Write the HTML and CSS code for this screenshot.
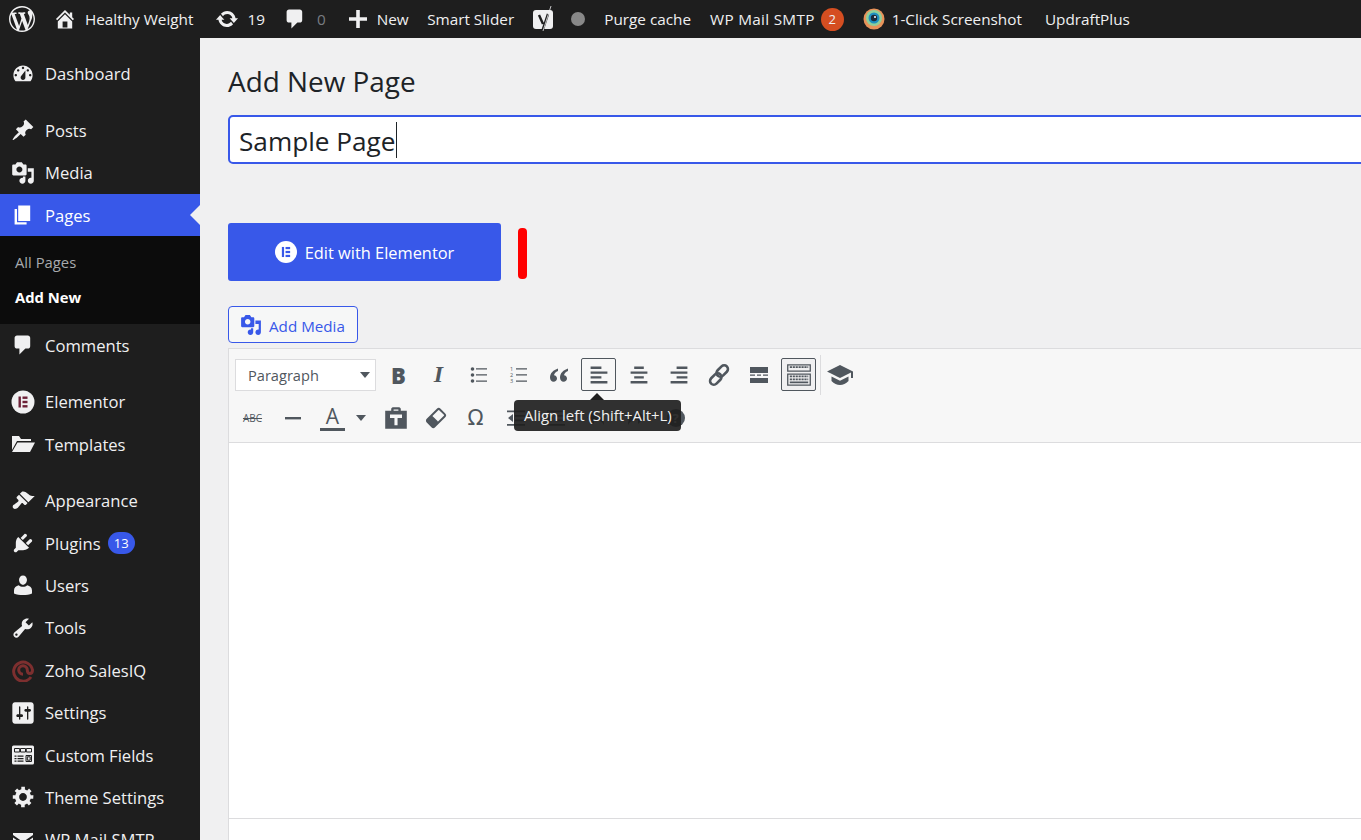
FILE: index.html
```html
<!DOCTYPE html>
<html lang="en">
<head>
  <meta charset="UTF-8" />
  <title>Add New Page</title>
  <link rel="stylesheet" href="styles.css">
</head>
<body>

<!-- Admin bar -->
<div class="adminbar">
  <svg class="bar-logo" viewBox="0 0 20 20"><path d="M20 10c0-5.510-4.490-10-10-10C4.480 0 0 4.490 0 10c0 5.520 4.480 10 10 10 5.510 0 10-4.480 10-10zM7.780 15.370L4.370 6.220c.550-.020 1.170-.080 1.170-.080.500-.060.440-1.130-.060-1.110 0 0-1.450.110-2.370.110-.180 0-.370 0-.580-.010C4.120 2.690 6.870 1.070 10 1.070c2.330 0 4.450.870 6.050 2.340-.680-.110-1.650.390-1.650 1.580 0 .740.450 1.360.900 2.100.350.610.550 1.360.550 2.460 0 1.490-1.400 5-1.400 5l-3.030-8.350c.540-.020.820-.170.820-.170.500-.050.440-1.250-.060-1.220 0 0-1.440.120-2.380.120-.870 0-2.330-.120-2.330-.120-.500-.030-.560 1.200-.060 1.220l.920.080 1.260 3.410zM17.410 10c.240-.640.740-1.870.430-4.250.700 1.290 1.050 2.710 1.050 4.250 0 3.290-1.730 6.240-4.510 7.750 1.010-2.700 2.020-5.030 3.030-7.750zM6.100 18.090C3.120 16.650 1.110 13.530 1.110 10c0-1.300.230-2.480.720-3.590C3.250 10.300 4.670 14.200 6.100 18.090zm4.030-6.630l2.580 6.980c-.860.290-1.740.450-2.710.450-.790 0-1.570-.110-2.290-.330.810-2.380 1.620-4.740 2.420-7.100z"/></svg>
  <div class="bar-item home">
    <svg class="bar-icon" viewBox="0 0 20 20"><path d="M16 8.500l1.530 1.530-1.060 1.060L10 4.620l-6.470 6.470-1.060-1.060L10 2.500l4 4v-2h2v4zm-6-2.460l6 5.990V18H4v-5.970zM12 17v-5H8v5h4z"/></svg>
    <span>Healthy Weight</span>
  </div>
  <div class="bar-item updates">
    <svg class="bar-icon" viewBox="0 0 20 20"><path d="M10.200 3.280c3.530 0 6.430 2.610 6.920 6h2.080l-3.500 4-3.500-4h2.320c-.45-1.970-2.210-3.440-4.320-3.440-1.450 0-2.730.710-3.540 1.780L4.950 5.660C6.230 4.200 8.110 3.280 10.200 3.280zm-.4 13.440c-3.520 0-6.430-2.610-6.920-6H.8l3.500-4c1.170 1.330 2.330 2.670 3.500 4H5.480c.45 1.970 2.210 3.440 4.320 3.440 1.450 0 2.730-.710 3.540-1.780l1.710 1.950c-1.280 1.460-3.150 2.390-5.250 2.390z"/></svg>
    <span>19</span>
  </div>
  <div class="bar-item comments">
    <svg class="bar-icon" viewBox="0 0 20 20"><path d="M5 2h9c1.100 0 2 .9 2 2v7c0 1.100-.9 2-2 2h-2l-5 5v-5H5c-1.100 0-2-.9-2-2V4c0-1.100.9-2 2-2z"/></svg>
    <span class="muted">0</span>
  </div>
  <div class="bar-item new">
    <svg class="bar-icon" viewBox="0 0 20 20"><path d="M8.500 2.500h3v6h6v3h-6v6h-3v-6h-6v-3h6z"/></svg>
    <span>New</span>
  </div>
  <div class="bar-item slider">Smart Slider</div>
  <div class="bar-item yoast">
    <svg class="bar-yoast" viewBox="0 0 22 28"><rect x="0" y="5" width="20" height="19" rx="3" fill="#f0f0f1"/><path d="M6 10l4 9M15 9l-5 15-3 3" fill="none" stroke="#1e1e1e" stroke-width="2.400"/><path d="M18 1l-8 25" fill="none" stroke="#f0f0f1" stroke-width=".8"/></svg>
    <span class="status-dot"></span>
  </div>
  <div class="bar-item purge">Purge cache</div>
  <div class="bar-item smtp">
    <span class="smtp-label">WP Mail SMTP</span>
    <span class="bar-badge">2</span>
  </div>
  <div class="bar-item shot">
    <svg class="bar-shot" viewBox="0 0 22 22"><circle cx="11" cy="11" r="10.500" fill="#e8935a"/><circle cx="11" cy="10" r="8" fill="#8fcf9a"/><circle cx="11" cy="10" r="5.500" fill="#1f8fc0"/><circle cx="11" cy="10" r="3.200" fill="#1b2a3a"/><circle cx="12" cy="9" r="1" fill="#fff"/></svg>
    <span>1-Click Screenshot</span>
  </div>
  <div class="bar-item updraft">UpdraftPlus</div>
</div>

<div class="layout">

  <!-- Sidebar -->
  <div class="sidebar">
    <div class="menu-item">
      <svg class="menu-icon" viewBox="0 0 20 20"><path fill-rule="evenodd" d="M3.760 16h12.480c1.100-1.370 1.760-3.110 1.760-5 0-4.420-3.580-8-8-8s-8 3.580-8 8c0 1.890.66 3.630 1.760 5zM10 4c.55 0 1 .45 1 1s-.45 1-1 1-1-.45-1-1 .45-1 1-1zM6 6c.55 0 1 .45 1 1s-.45 1-1 1-1-.45-1-1 .45-1 1-1zm8 0c.55 0 1 .45 1 1s-.45 1-1 1-1-.45-1-1 .45-1 1-1zm-5.370 5.550L12 7v6c0 1.100-.9 2-2 2s-2-.9-2-2c0-.57.24-1.080.63-1.450zM4 10c.55 0 1 .45 1 1s-.45 1-1 1-1-.45-1-1 .45-1 1-1zm12 0c.55 0 1 .45 1 1s-.45 1-1 1-1-.45-1-1 .45-1 1-1z"/></svg>
      <span>Dashboard</span>
    </div>
    <div class="menu-gap"></div>
    <div class="menu-item">
      <svg class="menu-icon" viewBox="0 0 20 20"><path d="M10.440 3.020l1.820-1.820 6.360 6.350-1.830 1.820c-1.050-.68-2.480-.57-3.410.36l-.75.75c-.92.93-1.040 2.350-.35 3.410l-1.830 1.820-2.410-2.410-2.800 2.790c-.42.42-3.380 2.710-3.800 2.290s1.860-3.390 2.280-3.810l2.790-2.790L4.100 9.360l1.830-1.820c1.050.69 2.480.57 3.400-.36l.75-.75c.93-.92 1.050-2.350.36-3.410z"/></svg>
      <span>Posts</span>
    </div>
    <div class="menu-item">
      <svg class="menu-icon" viewBox="0 0 20 20"><path fill-rule="evenodd" d="M13 11V4c0-.55-.45-1-1-1h-1.670L9 1H5L3.670 3H2c-.55 0-1 .45-1 1v7c0 .55.45 1 1 1h10c.55 0 1-.45 1-1zM7 4.500c1.380 0 2.500 1.120 2.500 2.500S8.380 9.500 7 9.500 4.500 8.380 4.500 7 5.620 4.500 7 4.500zM14 6h5v10.500c0 1.380-1.120 2.500-2.500 2.500S14 17.880 14 16.500s1.120-2.500 2.500-2.500c.17 0 .34.020.5.050V9h-3V6zm-4 8.050V13h2v3.500c0 1.380-1.120 2.500-2.500 2.500S7 17.880 7 16.500 8.120 14 9.500 14c.17 0 .34.020.5.050z"/></svg>
      <span>Media</span>
    </div>
    <div class="menu-item current">
      <svg class="menu-icon" viewBox="0 0 20 20"><path d="M6 15V2h10v13H6zm-1 1h8v2H3V5h2v11z"/></svg>
      <span>Pages</span>
    </div>
    <div class="submenu">
      <div class="sub-item">All Pages</div>
      <div class="sub-item active">Add New</div>
    </div>
    <div class="menu-item">
      <svg class="menu-icon" viewBox="0 0 20 20"><path d="M5 2h9c1.100 0 2 .9 2 2v7c0 1.100-.9 2-2 2h-2l-5 5v-5H5c-1.100 0-2-.9-2-2V4c0-1.100.9-2 2-2z"/></svg>
      <span>Comments</span>
    </div>
    <div class="menu-gap"></div>
    <div class="menu-item">
      <svg class="menu-icon" viewBox="0 0 24 24"><circle cx="12" cy="12" r="11.500"/><rect x="7.500" y="6.500" width="2.400" height="11" fill="#6d2138"/><rect x="11.500" y="6.500" width="5" height="2.400" fill="#6d2138"/><rect x="11.500" y="10.800" width="5" height="2.400" fill="#6d2138"/><rect x="11.500" y="15.100" width="5" height="2.400" fill="#6d2138"/></svg>
      <span>Elementor</span>
    </div>
    <div class="menu-item">
      <svg class="menu-icon" viewBox="0 0 24 24"><path d="M1 4h7l2 3h10v2H6L1 18zM6.500 10.500H24L19 20H1z"/></svg>
      <span>Templates</span>
    </div>
    <div class="menu-gap"></div>
    <div class="menu-item">
      <svg class="menu-icon" viewBox="0 0 20 20"><path d="M14.480 11.060L7.410 3.990l1.500-1.500c.5-.56 2.300-.47 3.510.32 1.210.8 1.430 1.280 2.910 2.100 1.180.64 2.450 1.260 4.450.85zm-.71.71L6.700 4.700 4.930 6.470c-.39.39-.39 1.020 0 1.410l1.060 1.060c.39.39.39 1.030 0 1.420-.6.6-1.430 1.110-2.210 1.690-.35.26-.7.53-1.010.84C1.430 13.230.91 14.990 1.950 16.040c1.040 1.040 2.810.52 4.140-.82.31-.31.58-.65.84-1 .58-.78 1.090-1.610 1.690-2.210.39-.39 1.020-.39 1.410 0l1.060 1.060c.39.39 1.020.39 1.410 0z"/></svg>
      <span>Appearance</span>
    </div>
    <div class="menu-item">
      <svg class="menu-icon" viewBox="0 0 20 20"><path d="M13.110 4.360L9.870 7.600 8 5.730l3.240-3.240c.35-.34 1.050-.2 1.560.32.52.51.66 1.210.31 1.550zm-8 1.770l.91-1.120 9.010 9.010-1.190.84c-.71.71-2.630 1.160-3.820 1.160H6.140L4.900 17.260c-.59.59-1.540.59-2.120 0-.59-.58-.59-1.530 0-2.120l1.240-1.240v-3.880c0-1.130.4-3.190 1.090-3.890zm7.260 3.970l3.240-3.240c.34-.35 1.040-.21 1.550.31.52.51.66 1.210.31 1.550l-3.240 3.250z"/></svg>
      <span>Plugins</span>
      <span class="menu-badge">13</span>
    </div>
    <div class="menu-item">
      <svg class="menu-icon" viewBox="0 0 20 20"><path d="M10 2c1.900 0 3.300 1.600 3.300 3.600S11.900 9.800 10 9.800 6.700 7.600 6.700 5.600 8.100 2 10 2zM6.500 10.200c.9.900 2.100 1.300 3.500 1.300s2.600-.4 3.500-1.300c2.300.6 4 2 4 4.300V17c-2 1-4.800 1.300-7.500 1.300S4.500 18 2.500 17v-2.500c0-2.300 1.700-3.700 4-4.300z"/></svg>
      <span>Users</span>
    </div>
    <div class="menu-item">
      <svg class="menu-icon" viewBox="0 0 20 20"><path fill-rule="evenodd" d="M16.680 9.770c-1.340 1.340-3.300 1.670-4.950.99l-5.410 6.520c-.99.99-2.590.99-3.570 0-.99-.98-.99-2.580 0-3.570l6.520-5.420c-.68-1.650-.35-3.610.99-4.950 1.280-1.280 3.120-1.620 4.720-1.060l-2.890 2.890 2.820 2.820 2.860-2.870c.53 1.580.18 3.390-1.090 4.650zM3.810 16.210c.4.39 1.030.39 1.420 0 .4-.4.4-1.030 0-1.430-.39-.39-1.020-.39-1.420 0-.39.4-.39 1.030 0 1.430z"/></svg>
      <span>Tools</span>
    </div>
    <div class="menu-item">
      <svg class="menu-icon" viewBox="0 0 24 24"><path d="M20 19A9.500 9.500 0 1 1 21.500 12c0 2-1 3.500-2.600 3.500S16.300 14 16.300 12A4.300 4.300 0 1 0 12 16.300" fill="none" stroke="#7d2f2f" stroke-width="3"/></svg>
      <span>Zoho SalesIQ</span>
    </div>
    <div class="menu-item">
      <svg class="menu-icon" viewBox="1 1 18 18"><path fill-rule="evenodd" d="M18 16V4c0-1.100-.9-2-2-2H4c-1.100 0-2 .9-2 2v12c0 1.100.9 2 2 2h12c1.100 0 2-.9 2-2zM8 11h1c.55 0 1 .45 1 1s-.45 1-1 1H8v1.500c0 .28-.22.5-.5.5s-.5-.22-.5-.5V13H6c-.55 0-1-.45-1-1s.45-1 1-1h1V5.500c0-.28.22-.5.5-.5s.5.22.5.5V11zm5-2h-1c-.55 0-1-.45-1-1s.45-1 1-1h1V5.500c0-.28.22-.5.5-.5s.5.22.5.5V7h1c.55 0 1 .45 1 1s-.45 1-1 1h-1v5.500c0 .28-.22.5-.5.5s-.5-.22-.5-.5V9z"/></svg>
      <span>Settings</span>
    </div>
    <div class="menu-item">
      <svg class="menu-icon" viewBox="0 0 24 24"><rect x="1" y="2.500" width="22" height="19" rx="1.500"/><path d="M3.500 5.500h5.200v3.500H3.500zM9.500 5.500h5v3.500h-5zM15.300 5.500h5.200v3.500h-5.200zM15 12.500h5.500v6H15zM16.300 13.800v3.400h2.900v-3.400z" fill="none" stroke="#1e1e1e" stroke-width="1"/><path d="M3.500 12.500h2v1.200h-2zM6.500 12.500h6v1.200h-6zM3.500 15h2v1.200h-2zM6.500 15h6v1.200h-6zM3.500 17.500h2v1.200h-2zM6.500 17.500h6v1.200h-6z" fill="#1e1e1e"/></svg>
      <span>Custom Fields</span>
    </div>
    <div class="menu-item">
      <svg class="menu-icon" viewBox="0 0 20 20"><path fill-rule="evenodd" d="M18.500 11.500h-2.180c-.17.7-.47 1.350-.87 1.920l1.540 1.540-2.100 2.100-1.540-1.540c-.57.4-1.220.7-1.920.87v2.180h-3v-2.180c-.7-.17-1.350-.47-1.920-.87l-1.540 1.540-2.120-2.120 1.540-1.540c-.4-.57-.7-1.220-.87-1.920H1.500v-3h2.180c.17-.7.47-1.350.87-1.920L3.010 5.040l2.120-2.120 1.540 1.540c.57-.4 1.220-.7 1.920-.87V1.500h3v2.180c.7.17 1.350.47 1.920.87l1.540-1.540 2.120 2.120-1.540 1.540c.4.57.7 1.220.87 1.920h2.180zM10 6.770c-1.790 0-3.230 1.450-3.230 3.230s1.440 3.230 3.230 3.230 3.230-1.450 3.230-3.230S11.790 6.770 10 6.770z"/></svg>
      <span>Theme Settings</span>
    </div>
    <div class="menu-item">
      <svg class="menu-icon" viewBox="0 0 24 24"><path d="M2 5h20v2l-10 7L2 7zM2 9.500l10 7 10-7V20H2z"/></svg>
      <span>WP Mail SMTP</span>
    </div>
  </div>

  <!-- Main -->
  <div class="main">
    <h1 class="page-title">Add New Page</h1>
    <div class="title-input"><span>Sample Page</span><span class="caret"></span></div>

    <div class="builder-row">
      <div class="elementor-btn">
        <svg class="btn-logo" viewBox="0 0 24 24"><circle cx="12" cy="12" r="12" fill="#fff"/><rect x="7.500" y="6.500" width="2.400" height="11" fill="#3858e9"/><rect x="11.500" y="6.500" width="5" height="2.400" fill="#3858e9"/><rect x="11.500" y="10.800" width="5" height="2.400" fill="#3858e9"/><rect x="11.500" y="15.100" width="5" height="2.400" fill="#3858e9"/></svg>
        <span>Edit with Elementor</span>
      </div>
      <div class="red-mark"></div>
    </div>

    <div class="media-btn">
      <svg class="media-icon" viewBox="0 0 20 20"><path fill-rule="evenodd" d="M13 11V4c0-.55-.45-1-1-1h-1.670L9 1H5L3.670 3H2c-.55 0-1 .45-1 1v7c0 .55.45 1 1 1h10c.55 0 1-.45 1-1zM7 4.500c1.380 0 2.500 1.120 2.500 2.500S8.380 9.500 7 9.500 4.500 8.380 4.500 7 5.620 4.500 7 4.500zM14 6h5v10.500c0 1.380-1.120 2.500-2.500 2.500S14 17.880 14 16.500s1.120-2.500 2.500-2.500c.17 0 .34.020.5.050V9h-3V6zm-4 8.050V13h2v3.500c0 1.380-1.120 2.500-2.500 2.500S7 17.880 7 16.500 8.120 14 9.500 14c.17 0 .34.020.5.050z"/></svg>
      <span class="media-label">Add Media</span>
    </div>

    <div class="editor">
      <div class="toolbar">
        <div class="tool-row">
          <div class="format-select"><span>Paragraph</span><i class="down"></i></div>
          <div class="tool tool-b">B</div>
          <div class="tool tool-i">I</div>
          <div class="tool"><svg viewBox="0 0 20 20"><circle cx="3.500" cy="4" r="1.800"/><circle cx="3.500" cy="10" r="1.800"/><circle cx="3.500" cy="16" r="1.800"/><path d="M7 3.200h11v1.300H7zM7 9.300h11v1.300H7zM7 15.400h11v1.300H7z"/></svg></div>
          <div class="tool"><svg viewBox="0 0 20 20"><text x="1" y="6" class="ol-num">1</text><text x="1" y="12" class="ol-num">2</text><text x="1" y="18" class="ol-num">3</text><path d="M7 3.200h11v1.300H7zM7 9.300h11v1.300H7zM7 15.400h11v1.300H7z"/></svg></div>
          <div class="tool"><svg viewBox="0 0 20 20"><path d="M9 3.500C4.500 5 1 8 1 12.500c0 2.600 1.500 4.200 3.600 4.200 1.900 0 3.400-1.400 3.400-3.300S6.700 10.200 5 10.200c.3-1.800 1.700-3.200 4-4.200zM19 3.500c-4.500 1.500-8 4.500-8 9 0 2.600 1.500 4.200 3.600 4.200 1.900 0 3.400-1.400 3.400-3.300s-1.300-3.200-3-3.200c.3-1.800 1.700-3.200 4-4.200z"/></svg></div>
          <div class="tool pressed"><svg class="icon-lg" viewBox="0 0 20 20"><path d="M12 5V3H3v2h9zm5 4V7H3v2h14zm-5 4v-2H3v2h9zm5 4v-2H3v2h14z"/></svg></div>
          <div class="tool"><svg class="icon-lg" viewBox="0 0 20 20"><path d="M14 5V3H6v2h8zm3 4V7H3v2h14zm-3 4v-2H6v2h8zm3 4v-2H3v2h14z"/></svg></div>
          <div class="tool"><svg class="icon-lg" viewBox="0 0 20 20"><path d="M17 5V3H8v2h9zm0 4V7H3v2h14zm0 4v-2H8v2h9zm0 4v-2H3v2h14z"/></svg></div>
          <div class="tool"><svg class="icon-lg" viewBox="0 0 24 24"><g fill="none" stroke="#50575e" stroke-width="2.600"><rect x="11.500" y="1.500" width="7.500" height="13" rx="3.750" transform="rotate(45 15.250 8)"/><rect x="5" y="9.500" width="7.500" height="13" rx="3.750" transform="rotate(45 8.750 16)"/></g></svg></div>
          <div class="tool"><svg viewBox="0 0 20 20"><path d="M1 2h18v6H1zM1 13h18v5H1z"/><path d="M1 9.400h5v1.400H1zM8 9.400h4v1.400H8zM14 9.400h5v1.400h-5z"/></svg></div>
          <div class="tool pressed sink"><svg viewBox="0 0 24 24"><path fill-rule="evenodd" d="M1 2h22v7H1zM2.200 3.200v4.600h19.600V3.200zM1 10.500h22v11.500H1zM2.200 11.700v9.100h19.600v-9.100z"/><path d="M3.500 4.800h17M3.500 13.300h17M3.500 16h17" fill="none" stroke="#50575e" stroke-width="1.600" stroke-dasharray="2 .7"/><path d="M3.500 18h17v1.600h-17z"/></svg></div>
          <div class="tool-sep"></div>
          <div class="tool tool-cap"><svg viewBox="0 0 26 22"><path d="M13 1L0 7.500l13 6.500 11-5.500v5.500h2V7.500zM4.500 12.500v4.500C7 19.500 10 21 13 21s6-1.500 8.500-4v-4.500L13 16.800z"/></svg></div>
        </div>
        <div class="tool-row second">
          <div class="tool tool-abc">ABC</div>
          <div class="tool"><svg viewBox="0 0 20 20"><path d="M2 9h16v2.400H2z"/></svg></div>
          <div class="tool tool-color"><span>A</span></div>
          <i class="down color-down"></i>
          <div class="tool paste"><svg class="icon-lg" viewBox="0 0 20 20"><path fill-rule="evenodd" d="M1 4h5V2.500C6 1.500 7 1 8 1h4c1 0 2 .5 2 1.500V4h5v15H1zM8 3v1h4V3zM5 7v3h3.700v6h2.600v-6H15V7z"/></svg></div>
          <div class="tool tool-eraser"><svg viewBox="0 0 20 20"><g transform="rotate(45 10 10)"><rect x="5.500" y="2" width="9" height="16" rx="1.500" fill="none" stroke="#50575e" stroke-width="1.800"/><rect x="5.500" y="11" width="9" height="7" rx="1.500"/></g></svg></div>
          <div class="tool tool-omega">Ω</div>
          <div class="tool"><svg viewBox="0 0 20 20"><path d="M1 2.500h18v1.700H1zM9 7h10v1.700H9zM9 11.500h10v1.700H9zM1 16h18v1.700H1zM7 6v8l-5-4z"/></svg></div>
          <div class="tool"><svg viewBox="0 0 20 20"><path d="M1 2.500h18v1.700H1zM9 7h10v1.700H9zM9 11.500h10v1.700H9zM1 16h18v1.700H1zM2 6v8l5-4z"/></svg></div>
          <div class="tool"><svg viewBox="0 0 20 20"><path d="M8 3v4c5 0 10 2 10 10-2-4-5-5-10-5v4L1 9.500z"/></svg></div>
          <div class="tool"><svg viewBox="0 0 20 20"><path d="M12 3v4C7 7 2 9 2 17c2-4 5-5 10-5v4l7-6.500z"/></svg></div>
          <div class="tool"><span class="help-dot">?</span></div>
        </div>
      </div>
      <div class="tooltip">
        <div class="tooltip-arrow"></div>
        <span>Align left (Shift+Alt+L)</span>
      </div>
      <div class="editor-area"></div>
      <div class="editor-foot"></div>
    </div>
  </div>
</div>

</body>
</html>
```

FILE: styles.css
```css
html, body {
  height: 100%;
}

body {
  margin: 0;
  background: #f0f0f1;
  color: #1d2327;
  font-family: "Open Sans", "Noto Sans", sans-serif;
  overflow: hidden;
}

/* Admin bar */
.adminbar {
  display: flex;
  align-items: center;
  height: 38px;
  background: #1e1e1e;
  color: #f0f0f1;
  font-size: 15.3px;
  white-space: nowrap;
}

.adminbar svg {
  fill: #f0f0f1;
  flex: none;
}

.bar-logo {
  width: 26px;
  height: 26px;
  margin-left: 9px;
}

.bar-item {
  display: flex;
  align-items: center;
}

.bar-icon {
  width: 24px;
  height: 24px;
}

.home {
  margin-left: 18px;
  gap: 8px;
}

.updates {
  margin-left: 22px;
  gap: 8px;
}

.comments {
  margin-left: 18px;
  gap: 10px;
}

.muted {
  color: #787c82;
}

.new {
  margin-left: 20px;
  gap: 7px;
}

.slider {
  margin-left: 18.5px;
}

.yoast {
  margin-left: 19px;
}

.bar-yoast {
  width: 22px;
  height: 28px;
}

.status-dot {
  width: 14px;
  height: 14px;
  margin-left: 16px;
  border-radius: 50%;
  background: #888;
}

.purge {
  margin-left: 19px;
}

.smtp {
  margin-left: 19px;
  gap: 6px;
}

.smtp-label {
  letter-spacing: 0.3px;
}

.bar-badge {
  width: 23px;
  height: 23px;
  border-radius: 50%;
  background: #d54e21;
  font-size: 13px;
  line-height: 23px;
  text-align: center;
}

.shot {
  margin-left: 19px;
  gap: 7px;
}

.bar-shot {
  width: 22px;
  height: 22px;
}

.updraft {
  margin-left: 23px;
}

.layout {
  display: flex;
  height: 802px;
}

/* Sidebar */
.sidebar {
  flex: none;
  width: 200px;
  padding-top: 14.6px;
  background: #1e1e1e;
  color: #f0f0f1;
  font-size: 16.6px;
  overflow: hidden;
}

.menu-item {
  position: relative;
  display: flex;
  align-items: center;
  height: 42.4px;
  padding-left: 11px;
  white-space: nowrap;
}

.menu-icon {
  flex: none;
  width: 24px;
  height: 24px;
  margin-right: 10px;
  fill: #f0f0f1;
}

.menu-gap {
  height: 14.2px;
}

.current {
  background: #3858e9;
  color: #fff;
}

.current .menu-icon {
  fill: #fff;
}

.current::after {
  content: "";
  position: absolute;
  right: 0;
  top: 50%;
  margin-top: -10px;
  border: 10px solid transparent;
  border-right-color: #f0f0f1;
}

.menu-badge {
  min-width: 27px;
  height: 22px;
  margin-left: 7px;
  border-radius: 11px;
  background: #3858e9;
  color: #fff;
  font-size: 13px;
  line-height: 22px;
  text-align: center;
}

.submenu {
  padding: 9px 0 8.6px;
  background: #0c0c0c;
  font-size: 14.8px;
}

.sub-item {
  height: 35px;
  padding-left: 15px;
  line-height: 35px;
  color: #a7aaad;
}

.sub-item.active {
  color: #fff;
  font-weight: 700;
}

/* Main */
.main {
  flex: 1;
  min-width: 0;
  padding-left: 28px;
  overflow: hidden;
}

.page-title {
  margin: 24px 0 0;
  font-size: 27.9px;
  font-weight: 400;
  line-height: 38px;
}

.title-input {
  display: flex;
  align-items: center;
  box-sizing: border-box;
  width: 1200px;
  height: 49px;
  margin-top: 15px;
  padding: 3px 0 0 9px;
  border: 2px solid #3858e9;
  border-radius: 5px;
  background: #fff;
  font-size: 26.2px;
}

.caret {
  width: 1px;
  height: 36px;
  margin-top: -3px;
  background: #1d2327;
}

.builder-row {
  display: flex;
  align-items: center;
  gap: 17px;
  margin-top: 59px;
}

.elementor-btn {
  display: flex;
  align-items: center;
  justify-content: center;
  gap: 8px;
  width: 273px;
  height: 58px;
  border-radius: 3px;
  background: #3858e9;
  color: #fff;
  font-size: 16.4px;
}

.btn-logo {
  width: 22px;
  height: 22px;
}

.red-mark {
  width: 9px;
  height: 51px;
  margin-top: 2px;
  border-radius: 4px;
  background: #f00;
}

.media-btn {
  display: flex;
  align-items: center;
  gap: 7px;
  box-sizing: border-box;
  width: 130px;
  height: 37px;
  margin-top: 25px;
  padding-left: 11px;
  border: 1px solid #3858e9;
  border-radius: 4px;
  background: #f6f7f7;
  color: #3858e9;
  font-size: 15.2px;
}

.media-label {
  padding-top: 2px;
}

.media-icon {
  width: 22px;
  height: 22px;
  fill: #3858e9;
}

/* Editor */
.editor {
  position: relative;
  width: 1200px;
  margin-top: 5px;
  border-left: 1px solid #dcdcde;
  background: #fff;
}

.toolbar {
  box-sizing: border-box;
  height: 95px;
  padding: 9px 0 0 6px;
  border-top: 1px solid #dcdcde;
  border-bottom: 1px solid #dcdcde;
  background: #f7f7f7;
}

.tool-row {
  display: flex;
  align-items: center;
  height: 33px;
}

.tool-row.second {
  margin-top: 10px;
}

.format-select {
  display: flex;
  align-items: center;
  justify-content: space-between;
  box-sizing: border-box;
  width: 141px;
  height: 32px;
  margin-right: 5px;
  padding: 0 5px 0 12px;
  border: 1px solid #dcdcde;
  background: #fff;
  color: #50575e;
  font-size: 14.6px;
}

.down {
  width: 0;
  height: 0;
  border: 5.5px solid transparent;
  border-top: 6px solid #50575e;
  border-bottom: 0;
}

.tool {
  display: flex;
  align-items: center;
  justify-content: center;
  flex: none;
  box-sizing: border-box;
  width: 35px;
  height: 33px;
  margin-right: 5px;
  border: 1px solid transparent;
  color: #50575e;
}

.tool svg {
  width: 20px;
  height: 20px;
  fill: #50575e;
}

.tool .icon-lg {
  width: 24px;
  height: 24px;
}

.pressed {
  border-color: #50575e;
  border-radius: 2px;
  background: #f7f7f7;
}

.sink {
  background: #f0f0f1;
}

.tool.sink svg {
  width: 26px;
  height: 26px;
}

.tool-sep {
  width: 1px;
  height: 40px;
  margin: 0 1px 0 -1px;
  background: #dcdcde;
}

.tool.tool-cap svg {
  width: 26px;
  height: 22px;
}

.tool.tool-eraser svg {
  width: 22px;
  height: 22px;
}

.tool-b {
  font-size: 22px;
  font-weight: 800;
}

.tool-i {
  font-family: "Liberation Serif", serif;
  font-size: 24px;
  font-weight: 700;
  font-style: italic;
}

.ol-num {
  font-size: 5.500px;
  fill: #50575e;
}

.tool-abc {
  font-size: 10px;
  text-decoration: line-through;
}

.tool-color span {
  display: block;
  width: 25px;
  border-bottom: 3px solid #50575e;
  font-size: 21px;
  line-height: 23px;
  text-align: center;
}

.tool-color {
  margin-right: 0;
}

.color-down {
  margin: 0 12px 0 6px;
}

.tool-omega {
  font-family: "DejaVu Sans", sans-serif;
  font-size: 21px;
}

.help-dot {
  width: 18px;
  height: 18px;
  border-radius: 50%;
  background: #50575e;
  color: #f6f7f7;
  font-size: 13px;
  font-weight: 700;
  line-height: 18px;
  text-align: center;
}

.tooltip {
  position: absolute;
  left: 285px;
  top: 52px;
  padding: 0 9px 0 10px;
  border-radius: 4px;
  background: rgba(30, 30, 30, 0.92);
  color: #f0f0f1;
  font-size: 14.9px;
  line-height: 31px;
  white-space: nowrap;
}

.tooltip-arrow {
  position: absolute;
  left: 76px;
  top: -7px;
  border: 7px solid transparent;
  border-top: 0;
  border-bottom-color: #1e1e1e;
}

.editor-area {
  height: 375px;
  border-bottom: 1px solid #dcdcde;
}

.editor-foot {
  height: 30px;
}
```
